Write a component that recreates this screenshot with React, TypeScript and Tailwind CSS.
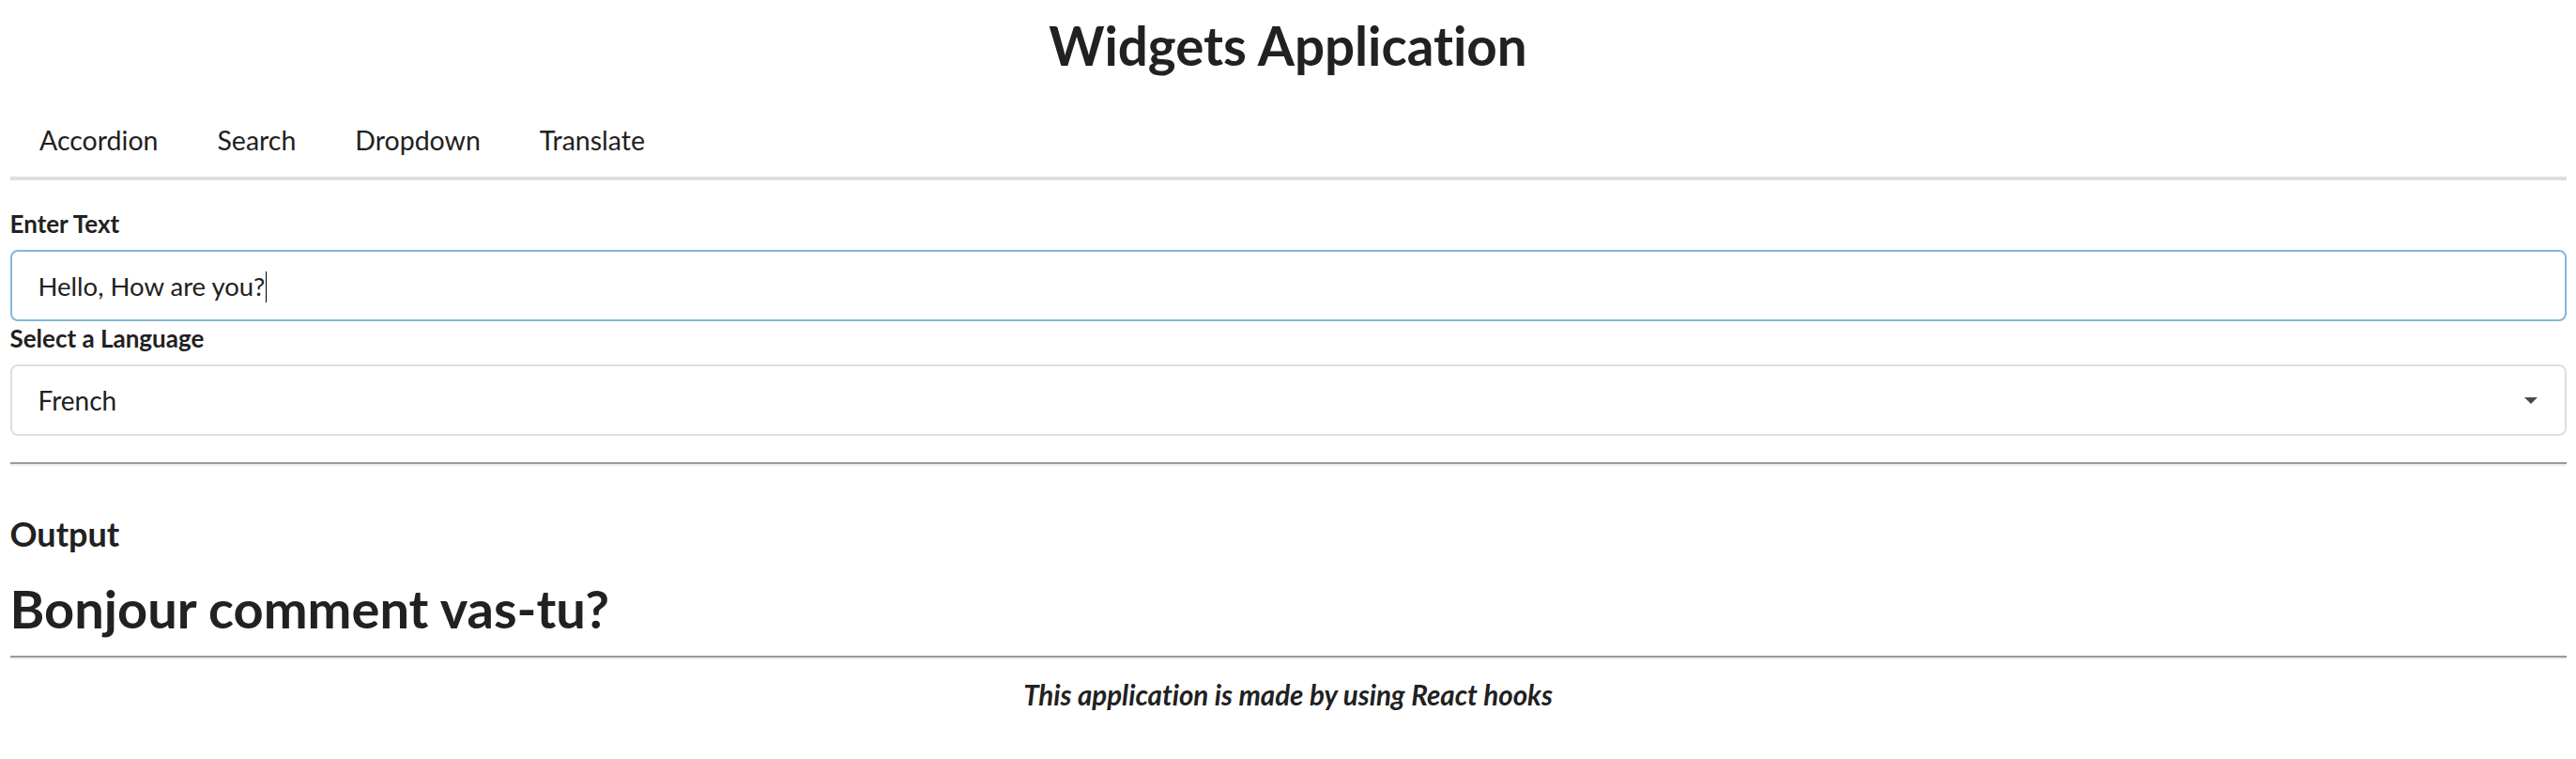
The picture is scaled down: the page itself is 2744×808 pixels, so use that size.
import * as React from "react";

const TABS = ["Accordion", "Search", "Dropdown", "Translate"];

function Caret() {
  return (
    <svg width="14" height="7" viewBox="0 0 14 7" className="shrink-0">
      <polygon points="0,0 14,0 7,7" fill="#4a4a4a" />
    </svg>
  );
}

export default function App() {
  const [text] = React.useState("Hello, How are you?");
  const [language] = React.useState("French");

  return (
    <div className="min-h-screen bg-white px-[10.5px] font-['Lato',sans-serif] text-[#212121] [font-variant-ligatures:none]">
      <h1 className="pt-[20px] text-center text-[56.5px] font-bold leading-[56px]">
        Widgets Application
      </h1>

      {/* Tabs */}
      <nav className="mt-[35px] flex border-b-4 border-[#dedede]">
        {TABS.map((tab) => (
          <a key={tab} className="px-[31.5px] py-[24px] text-[28.5px] leading-[29px]">
            {tab}
          </a>
        ))}
      </nav>

      {/* Translate form */}
      <label className="mt-[33px] block text-[26px] font-bold leading-[26px]">Enter Text</label>
      <div className="mt-[15px] flex h-[76px] items-center rounded-[8px] border-2 border-[#85b7d9] px-[28px] pt-[2px] text-[27.5px]">
        <span>{text}</span>
        <span className="ml-[1px] h-[33px] w-[1px] bg-black" />
      </div>

      <label className="mt-[5px] block text-[26px] font-bold leading-[26px]">Select a Language</label>
      <div className="mt-[15px] flex h-[76px] items-center justify-between rounded-[8px] border-2 border-[#dedede] pl-[28px] pr-[29px] text-[28px]">
        <span>{language}</span>
        <Caret />
      </div>

      <hr className="mt-[28px] border-t-2 border-b-2 border-t-[#9a9a9a] border-b-[#eeeeee]" />

      <h3 className="mt-[54px] text-[36px] font-bold leading-[36px]">Output</h3>
      <h1 className="mt-[34px] text-[56px] font-bold leading-[56px]">Bonjour comment vas-tu?</h1>

      <hr className="mt-[22px] border-t-2 border-b-2 border-t-[#9a9a9a] border-b-[#eeeeee]" />

      <p className="mt-[23px] text-center text-[29.5px] font-bold italic leading-[30px]">
        This application is made by using React hooks
      </p>
    </div>
  );
}
